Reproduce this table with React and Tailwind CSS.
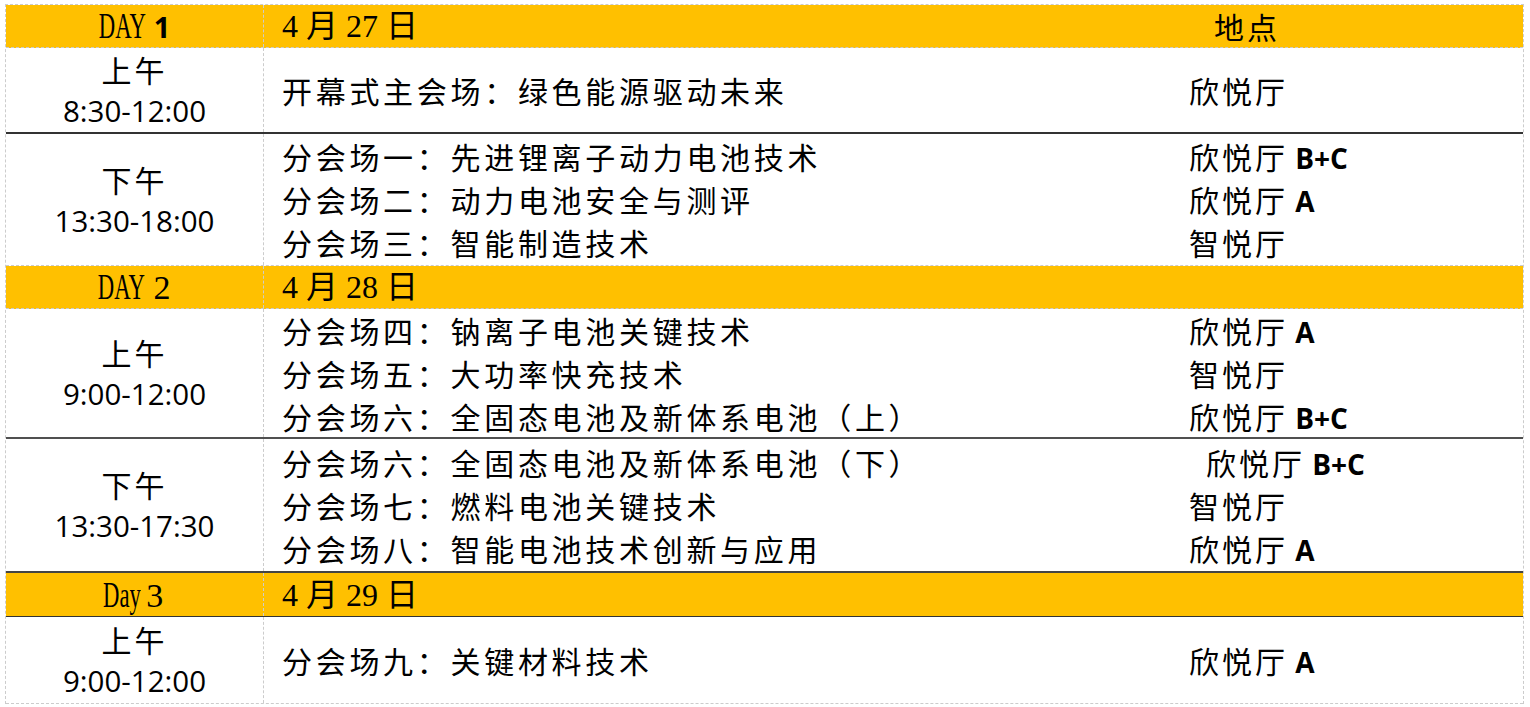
import React from "react";

const CJK = "font-['Noto_Sans_CJK_SC',sans-serif]";
const SERIF = "font-['Liberation_Serif','Noto_Sans_CJK_SC',serif]";
const NUM = "font-['Open_Sans','Liberation_Sans',sans-serif]";

const DASH = "border-dashed border-[#cccccc]";

function Day({ word, num, boldNum }){
  return (
    <span className={`${SERIF} text-[34px] leading-none text-black`}>
      <span className="inline-block text-[36px] -mx-[14px] scale-x-[0.63]">{word}</span>
      {" "}
      {boldNum
        ? <span className={`${NUM} font-bold text-[29px]`}>{num}</span>
        : <span>{num}</span>}
    </span>
  );
}

function HeadRow({ day, date, place, bottom, h }){
  return (
    <div className={`flex ${h} bg-[#ffc000] ${bottom}`}>
      <div className={`w-[258px] shrink-0 flex items-center justify-center border-r ${DASH}`}>
        {day}
      </div>
      <div className="flex-1 flex items-center">
        <div className={`w-[907px] pl-[18px] ${SERIF} text-[32px] text-black`}>
          4 月 {date} 日
        </div>
        {place && (
          <div className={`pl-[43px] ${CJK} text-[30px] tracking-[3px] text-black`}>{place}</div>
        )}
      </div>
    </div>
  );
}

function Place({ name, suffix, indent }){
  return (
    <div className={`${indent ? "pl-[35px]" : "pl-[18px]"} ${CJK} text-[30px] tracking-[3px] text-black whitespace-nowrap`}>
      {name}
      {suffix && <span className={`${NUM} font-bold text-[28px] tracking-normal`}> {suffix}</span>}
    </div>
  );
}

function BodyRow({ period, time, items, bottom, h }){
  return (
    <div className={`flex ${h} bg-white ${bottom}`}>
      <div className={`w-[258px] shrink-0 flex flex-col items-center justify-center border-r ${DASH}`}>
        <div className={`${CJK} text-[30px] tracking-[3px] leading-[42px] text-black`}>{period}</div>
        <div className={`${NUM} text-[29.5px] leading-[42px] text-black`}>{time}</div>
      </div>
      <div className="flex-1 flex flex-col justify-center">
        {items.map((it, i) => (
          <div key={i} className="flex items-center h-[43px]">
            <div className={`w-[907px] pl-[18px] ${CJK} text-[30px] tracking-[3.7px] text-black whitespace-nowrap`}>
              {it.title}
            </div>
            <Place name={it.place} suffix={it.suffix} indent={it.indent} />
          </div>
        ))}
      </div>
    </div>
  );
}

export default function App(){
  return (
    <div className="w-[1530px] h-[707px] bg-white overflow-hidden">
      <div className={`ml-[5px] mt-[4px] w-[1519px] border-l border-r border-t ${DASH}`}>
        <HeadRow
          h="h-[43px]"
          bottom={`border-b ${DASH}`}
          day={<Day word="DAY" num="1" boldNum />}
          date="27"
          place="地点"
        />
        <BodyRow
          h="h-[86px]"
          bottom="border-b-2 border-solid border-[#333333]"
          period="上午"
          time="8:30-12:00"
          items={[{ title: "开幕式主会场：绿色能源驱动未来", place: "欣悦厅" }]}
        />
        <BodyRow
          h="h-[132px]"
          bottom={`border-b ${DASH}`}
          period="下午"
          time="13:30-18:00"
          items={[
            { title: "分会场一：先进锂离子动力电池技术", place: "欣悦厅", suffix: "B+C" },
            { title: "分会场二：动力电池安全与测评", place: "欣悦厅", suffix: "A" },
            { title: "分会场三：智能制造技术", place: "智悦厅" },
          ]}
        />
        <HeadRow
          h="h-[43px]"
          bottom={`border-b ${DASH}`}
          day={<Day word="DAY" num="2" />}
          date="28"
        />
        <BodyRow
          h="h-[130px]"
          bottom="border-b-2 border-solid border-[#505050]"
          period="上午"
          time="9:00-12:00"
          items={[
            { title: "分会场四：钠离子电池关键技术", place: "欣悦厅", suffix: "A" },
            { title: "分会场五：大功率快充技术", place: "智悦厅" },
            { title: "分会场六：全固态电池及新体系电池（上）", place: "欣悦厅", suffix: "B+C" },
          ]}
        />
        <BodyRow
          h="h-[134px]"
          bottom="border-b-2 border-solid border-[#444444]"
          period="下午"
          time="13:30-17:30"
          items={[
            { title: "分会场六：全固态电池及新体系电池（下）", place: "欣悦厅", suffix: "B+C", indent: true },
            { title: "分会场七：燃料电池关键技术", place: "智悦厅" },
            { title: "分会场八：智能电池技术创新与应用", place: "欣悦厅", suffix: "A" },
          ]}
        />
        <HeadRow
          h="h-[44px]"
          bottom="border-b border-solid border-[#333333]"
          day={<Day word="Day" num="3" />}
          date="29"
        />
        <BodyRow
          h="h-[87px]"
          bottom={`border-b ${DASH}`}
          period="上午"
          time="9:00-12:00"
          items={[{ title: "分会场九：关键材料技术", place: "欣悦厅", suffix: "A" }]}
        />
      </div>
    </div>
  );
}
